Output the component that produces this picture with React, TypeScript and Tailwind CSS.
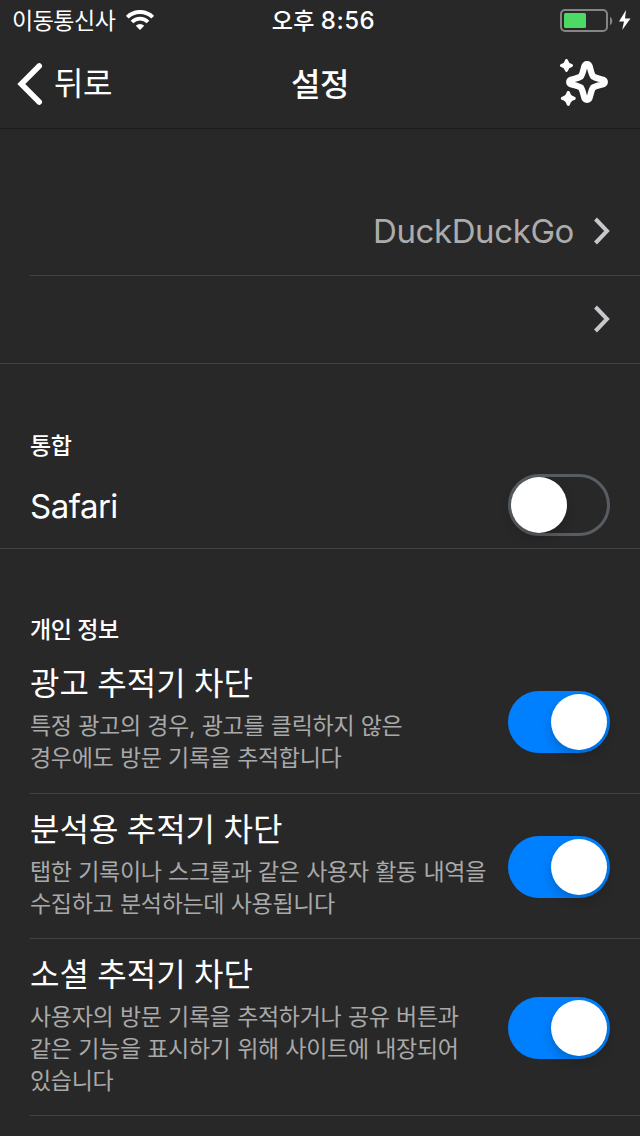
import type { ReactNode } from "react";

function Chevron() {
  return (
    <svg width="18" height="28" viewBox="0 0 18 28" className="mb-[2px] shrink-0" fill="none">
      <path d="M2.500 2 14 14 2.500 26" stroke="#c7c7cc" strokeWidth="4" />
    </svg>
  );
}

function Toggle({ on = false }: { on?: boolean }) {
  return (
    <div
      className={
        on
          ? "mt-[2px] flex h-[62px] w-[102px] shrink-0 items-center justify-end rounded-full bg-[#0080ff] pr-[3px] pb-px"
          : "flex h-[62px] w-[102px] shrink-0 items-center justify-start rounded-full border-[3px] border-[#585d63]"
      }
    >
      <div className="h-14 w-14 rounded-full bg-white shadow-[0_5px_12px_rgba(0,0,0,0.2)]" />
    </div>
  );
}

function SectionTitle({ children }: { children: ReactNode }) {
  return <h2 className="h-8 pl-[30px] text-[23px] leading-8 font-medium tracking-[-0.4px]">{children}</h2>;
}

function Tracker({ title, lines, className }: { title: string; lines: string[]; className: string }) {
  return (
    <div className={"ml-[30px] flex justify-between border-b border-[#434343] pr-[30px] " + className}>
      <div className="whitespace-nowrap">
        <h3 className="h-[47px] text-[32px] leading-[42px] [word-spacing:-0.6px]">{title}</h3>
        {lines.map((line) => (
          <p key={line} className="h-8 text-[23px] leading-8 tracking-[-0.3px] text-[#a9a9a9] [word-spacing:0.3px]">
            {line}
          </p>
        ))}
      </div>
      <div className="-mt-[var(--row-pad)] flex items-center">
        <Toggle on />
      </div>
    </div>
  );
}

const SPARK = "M0-5Q1-1 5 0Q1 1 0 5Q-1 1-5 0Q-1-1 0-5Z";

export default function App() {
  return (
    <div className="h-[1136px] w-[640px] overflow-hidden bg-[#282828] font-['Inter','Noto_Sans_CJK_KR',sans-serif] text-white">
      <header className="h-[129px] border-b border-[#1c1c1c]">
        <div className="grid h-10 grid-cols-3 grid-rows-[40px] items-center whitespace-nowrap">
          <div className="flex items-center pl-3">
            <span className="pt-[2px] text-[23px] leading-[38px] tracking-[-0.5px]">이동통신사</span>
            <svg width="28" height="20" viewBox="0 0 28 20" className="ml-[11px]" fill="none" stroke="#fff">
              <path d="M1.3 7.2a18 18 0 0 1 25.4 0" strokeWidth="4" />
              <path d="M6 12a11.3 11.3 0 0 1 16 0" strokeWidth="3.8" />
              <path d="m14 20-4.2-4.2a6 6 0 0 1 8.4 0Z" fill="#fff" stroke="none" />
            </svg>
          </div>
          <span className="pt-[2px] pl-[7px] text-center text-[23px] leading-[38px] font-medium tracking-[0.2px]">
            오후 <span className="text-[24px] tracking-[0.5px]">8:56</span>
          </span>
          <div className="flex items-center justify-end pr-[9px]">
            <svg width="72" height="24" viewBox="0 0 72 24">
              <rect x="2" y="2" width="46" height="21" rx="4" fill="none" stroke="#858585" strokeWidth="2" />
              <rect x="5" y="5" width="22" height="15" rx="1.5" fill="#4cd964" />
              <path d="M51 9c3 1 3 7 0 8Z" fill="#858585" />
              <path d="M67 2 60 13.500h5l-1.800 8.500L71.500 10.500h-5.500Z" fill="#fff" />
            </svg>
          </div>
        </div>
        <div className="grid h-[88px] grid-cols-3 items-center whitespace-nowrap">
          <div className="flex items-center pl-[17px]">
            <svg width="26" height="44" viewBox="0 0 26 44" fill="none">
              <path d="M22.200 4 4.300 22l17.900 18" stroke="#fff" strokeWidth="5.600" strokeLinecap="round" strokeLinejoin="miter" />
            </svg>
            <span className="pl-[11px] text-[32px] leading-[48px] tracking-[-0.4px]">뒤로</span>
          </div>
          <h1 className="pt-px text-center text-[32px] leading-[48px] font-medium tracking-[-0.4px]">설정</h1>
          <div className="flex justify-end pr-[31px]">
            <svg width="50" height="50" viewBox="0 0 50 50">
              <path
                d="M28 5.200C29.800 5.200 30.500 6.400 31 8.500 32.300 14 32.600 15.300 34 17.300 36 18.700 37.300 19 42.500 20.300 44.800 20.800 45.800 21.500 45.800 23C45.800 24.500 44.800 25.200 42.500 25.700 37.300 27 36 27.300 34 28.700 32.600 30.700 32.300 32 31 37.500 30.500 39.600 29.800 40.800 28 40.800C26.200 40.800 25.500 39.600 25 37.500 23.700 32 23.400 30.700 22 28.700 20 27.300 18.700 27 13.500 25.700 11.200 25.200 10.200 24.500 10.200 23C10.200 21.500 11.200 20.800 13.500 20.300 18.700 19 20 18.700 22 17.300 23.400 15.300 23.700 14 25 8.500 25.500 6.400 26.200 5.200 28 5.200Z"
                fill="none"
                stroke="#fff"
                strokeWidth="6.300"
                strokeLinejoin="round"
              />
              <g fill="#fff" stroke="#fff" strokeWidth="3" strokeLinejoin="round">
                <path d={SPARK} transform="translate(7.5 6.500)" />
                <path d={SPARK} transform="translate(9.3 39.400) scale(1.15)" />
              </g>
            </svg>
          </div>
        </div>
      </header>

      <main>
        <div className="pt-[59px]">
          <div className="ml-[30px] flex h-[88px] items-center justify-end border-b border-[#434343] pr-[29px]">
            <span className="pr-[19px] pb-[2px] text-[33px] leading-[44px] tracking-[-0.4px] text-[#acacac]">DuckDuckGo</span>
            <Chevron />
          </div>
          <div className="flex h-[88px] items-center justify-end border-b border-[#434343] pr-[29px]">
            <Chevron />
          </div>
        </div>

        <section className="pt-[66px]">
          <SectionTitle>통합</SectionTitle>
          <div className="flex h-[87px] items-center justify-between border-b border-[#434343] pr-[30px] pl-[30px]">
            <span className="pt-[2px] text-[33px] leading-[44px] tracking-[-0.5px]">Safari</span>
            <Toggle />
          </div>
        </section>

        <section className="pt-[65px]">
          <SectionTitle>개인 정보</SectionTitle>
          <div className="pt-[3px]">
            <Tracker
              className="h-[145px] pt-[14px] [--row-pad:14px]"
              title="광고 추적기 차단"
              lines={["특정 광고의 경우, 광고를 클릭하지 않은", "경우에도 방문 기록을 추적합니다"]}
            />
            <Tracker
              className="h-[145px] pt-[15px] [--row-pad:15px]"
              title="분석용 추적기 차단"
              lines={["탭한 기록이나 스크롤과 같은 사용자 활동 내역을", "수집하고 분석하는데 사용됩니다"]}
            />
            <Tracker
              className="h-[177px] pt-[15px] [--row-pad:15px]"
              title="소셜 추적기 차단"
              lines={["사용자의 방문 기록을 추적하거나 공유 버튼과", "같은 기능을 표시하기 위해 사이트에 내장되어", "있습니다"]}
            />
          </div>
        </section>
      </main>
    </div>
  );
}
